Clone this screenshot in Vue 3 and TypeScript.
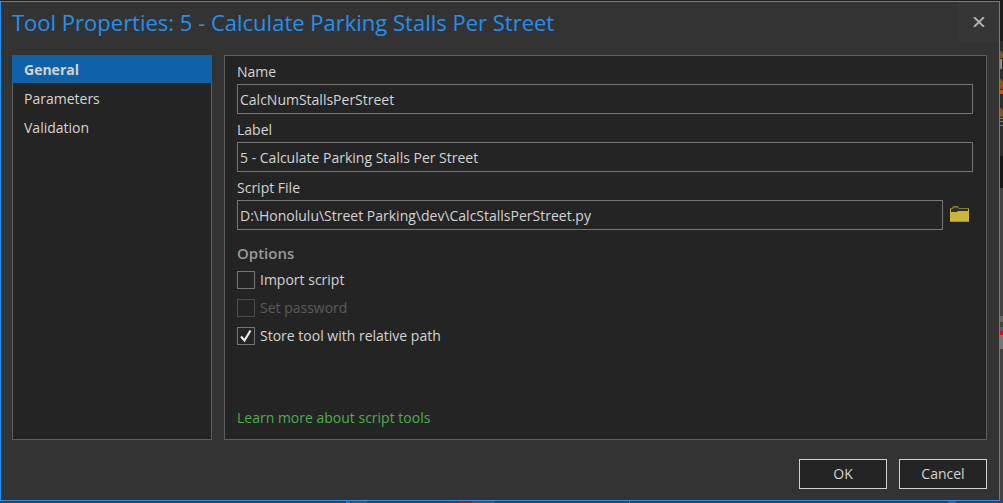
<script setup lang="ts">
import { ref } from 'vue'

const pages = ['General', 'Parameters', 'Validation']
const activePage = ref('General')

const name = ref('CalcNumStallsPerStreet')
const label = ref('5 - Calculate Parking Stalls Per Street')
const scriptFile = ref('D:\\Honolulu\\Street Parking\\dev\\CalcStallsPerStreet.py')

const options = ref([
  { id: 'import', text: 'Import script', checked: false, disabled: false },
  { id: 'password', text: 'Set password', checked: false, disabled: true },
  { id: 'relative', text: 'Store tool with relative path', checked: true, disabled: false },
])
</script>

<template>
  <div class="desktop">
    <!-- slivers of the application window behind the dialog -->
    <svg class="behind-right" width="3" height="503" aria-hidden="true">
      <rect width="3" height="41" fill="#1c1c1c" />
      <rect y="41" width="3" height="115" fill="#2d2d2d" />
      <path d="M0 51h1l2 3v4H0z" fill="#8a5418" />
      <rect y="59" width="2" height="10" fill="#8c8c8c" />
      <path d="M0 79h1l2 3v5l-1 2H0z" fill="#8a5418" />
      <rect y="90" width="3" height="4" fill="#d8481e" />
      <path d="M0 108h1l2 3v4l-1 2H0z" fill="#8a5418" />
      <path d="M0 118.500h3M0 121.500h3M0 125.500h3" stroke="#7d7d7d" />
      <rect y="156" width="3" height="32" fill="#171717" />
      <rect y="188" width="3" height="315" fill="#434345" />
      <rect y="316" width="3" height="6" fill="#666" />
      <rect y="327" width="3" height="4" fill="#5a5a5a" />
      <rect y="331" width="3" height="4" fill="#f00000" />
      <rect y="335" width="3" height="1" fill="#6a6ad8" />
      <rect y="336" width="3" height="13" fill="#777" />
    </svg>
    <svg class="behind-bottom" width="1000" height="2" aria-hidden="true">
      <rect width="1000" height="2" fill="#3e3e40" />
      <rect x="346" width="4" height="2" fill="#2f63c8" />
      <rect x="351" width="16" height="2" fill="#505052" />
      <rect x="458" width="14" height="2" fill="#e00000" />
      <rect x="472" width="22" height="2" fill="#505052" />
      <rect x="629" width="1" height="2" fill="#6a6ad8" />
      <rect x="948" width="8" height="2" fill="#50508c" />
    </svg>

    <form class="dialog" @submit.prevent>
      <header class="titlebar">
        <h1>Tool Properties: 5 - Calculate Parking Stalls Per Street</h1>
        <button type="button" class="close" aria-label="Close">
          <svg width="12" height="10" viewBox="0 0 12 10">
            <path d="M1 0l10 10M11 0L1 10" stroke="#b4b4b4" stroke-width="1.800" fill="none" />
          </svg>
        </button>
      </header>

      <div class="body">
        <nav class="pages">
          <button
            v-for="page in pages"
            :key="page"
            type="button"
            :class="{ active: page === activePage }"
            @click="activePage = page"
          >{{ page }}</button>
        </nav>

        <main class="panel">
          <div class="field">
            <label for="tool-name">Name</label>
            <input id="tool-name" v-model="name" type="text" />
          </div>
          <div class="field">
            <label for="tool-label">Label</label>
            <input id="tool-label" v-model="label" type="text" />
          </div>
          <div class="field">
            <label for="tool-script">Script File</label>
            <div class="file-row">
              <input id="tool-script" v-model="scriptFile" type="text" />
              <button type="button" class="browse" aria-label="Browse">
                <svg width="19" height="16" viewBox="0 0 19 16">
                  <path d="M0 2h2l1-2h5l1 2h10v14H0z" fill="#8a7a24" />
                  <path d="M1 3h2l1-1h4l1 1h9v3H1z" fill="#2c2c34" />
                  <path d="M3 1h5v1H3z" fill="#6e6222" />
                  <path d="M0 3h1v3h6l1-1h10V3h1v12.500H0z" fill="#cbb637" />
                </svg>
              </button>
            </div>
          </div>

          <fieldset class="options">
            <legend>Options</legend>
            <label v-for="option in options" :key="option.id" :class="{ disabled: option.disabled }">
              <span class="box">
                <input v-model="option.checked" type="checkbox" :disabled="option.disabled" />
                <svg v-if="option.checked" width="18" height="18" viewBox="0 0 18 18">
                  <path d="M4 9.500l3.500 4L13.500 3.500" stroke="#ececec" stroke-width="2.200" fill="none" />
                </svg>
              </span>
              {{ option.text }}
            </label>
          </fieldset>

          <a class="learn" href="#">Learn more about script tools</a>
        </main>
      </div>

      <footer class="actions">
        <button type="submit">OK</button>
        <button type="button">Cancel</button>
      </footer>
    </form>
  </div>
</template>

<style>
body {
  margin: 0;
  background: #1c1c1c;
}
</style>

<style scoped>
.desktop {
  position: relative;
  box-sizing: border-box;
  display: flex;
  min-height: 100vh;
  padding: 1px 3px 2px 0;
  font: 14px/20px "Open Sans", "Noto Sans", sans-serif;
  color: #d4d4d4;
}
.behind-right {
  position: absolute;
  top: 0;
  right: 0;
}
.behind-bottom {
  position: absolute;
  bottom: 0;
  left: 0;
}
.dialog {
  position: relative;
  box-sizing: border-box;
  flex: 1;
  min-width: 0;
  display: flex;
  flex-direction: column;
  padding: 0 12px 11px 11px;
  border: 1px solid #2490f0;
  background: #333333;
}
button,
input {
  box-sizing: border-box;
  margin: 0;
  font: inherit;
  color: inherit;
}
.titlebar {
  display: flex;
  justify-content: space-between;
  align-items: flex-start;
  height: 53px;
  margin-right: -12px;
}
h1 {
  margin: 0;
  font-size: 22px;
  line-height: 40px;
  font-weight: 400;
  color: #2490f0;
  white-space: nowrap;
}
.close {
  display: flex;
  align-items: center;
  justify-content: center;
  width: 41px;
  height: 40px;
  padding: 0;
  border: 0;
  background: #363636;
}
.body {
  flex: 1;
  display: flex;
  gap: 12px;
}
.pages {
  box-sizing: border-box;
  flex: none;
  display: flex;
  flex-direction: column;
  gap: 1px;
  width: 200px;
  border: 1px solid #5f5f5f;
  background: #242424;
}
.pages button {
  height: 28px;
  padding: 2px 11px 0;
  border: 0;
  background: none;
  text-align: left;
}
.pages .active {
  margin: -1px -1px 0;
  padding: 2px 12px 0;
  background: #1062a8;
  font-weight: 700;
}
.panel {
  flex: 1;
  min-width: 0;
  display: flex;
  flex-direction: column;
  align-items: stretch;
  padding: 6px 13px 11px 12px;
  border: 1px solid #5f5f5f;
  background: #242424;
}
.field {
  display: flex;
  flex-direction: column;
  gap: 2px;
  margin-bottom: 6px;
}
.field label {
  line-height: 20px;
}
.field input {
  width: 100%;
  min-width: 0;
  height: 30px;
  padding: 0 2px;
  border: 1px solid #767676;
  background: #242424;
  outline: 0;
}
.file-row {
  display: flex;
  align-items: center;
  gap: 7px;
}
.browse {
  display: flex;
  padding: 0 4px 2px 0;
  border: 0;
  background: none;
}
.options {
  display: flex;
  flex-direction: column;
  gap: 8px;
  margin: 7px 0 0;
  padding: 0;
  border: 0;
}
.options legend {
  margin-bottom: 7px;
  padding: 0;
  font-size: 15px;
  font-weight: 600;
  color: #9a9a9a;
}
.options label {
  display: flex;
  align-items: center;
  gap: 5px;
}
.options .disabled {
  color: #5c5c5c;
}
.box {
  position: relative;
  display: flex;
}
.box input {
  appearance: none;
  width: 18px;
  height: 18px;
  border: 1px solid #767676;
}
.disabled .box input {
  border-color: #4c4c4c;
}
.box svg {
  position: absolute;
  inset: 0;
  pointer-events: none;
}
.learn {
  align-self: flex-start;
  margin-top: auto;
  color: #4cae4c;
  text-decoration: none;
}
.actions {
  display: flex;
  justify-content: flex-end;
  gap: 12px;
  margin-top: 19px;
}
.actions button {
  width: 88px;
  height: 30px;
  padding: 0;
  border: 1px solid #d0d0d0;
  background: #242424;
}
</style>
